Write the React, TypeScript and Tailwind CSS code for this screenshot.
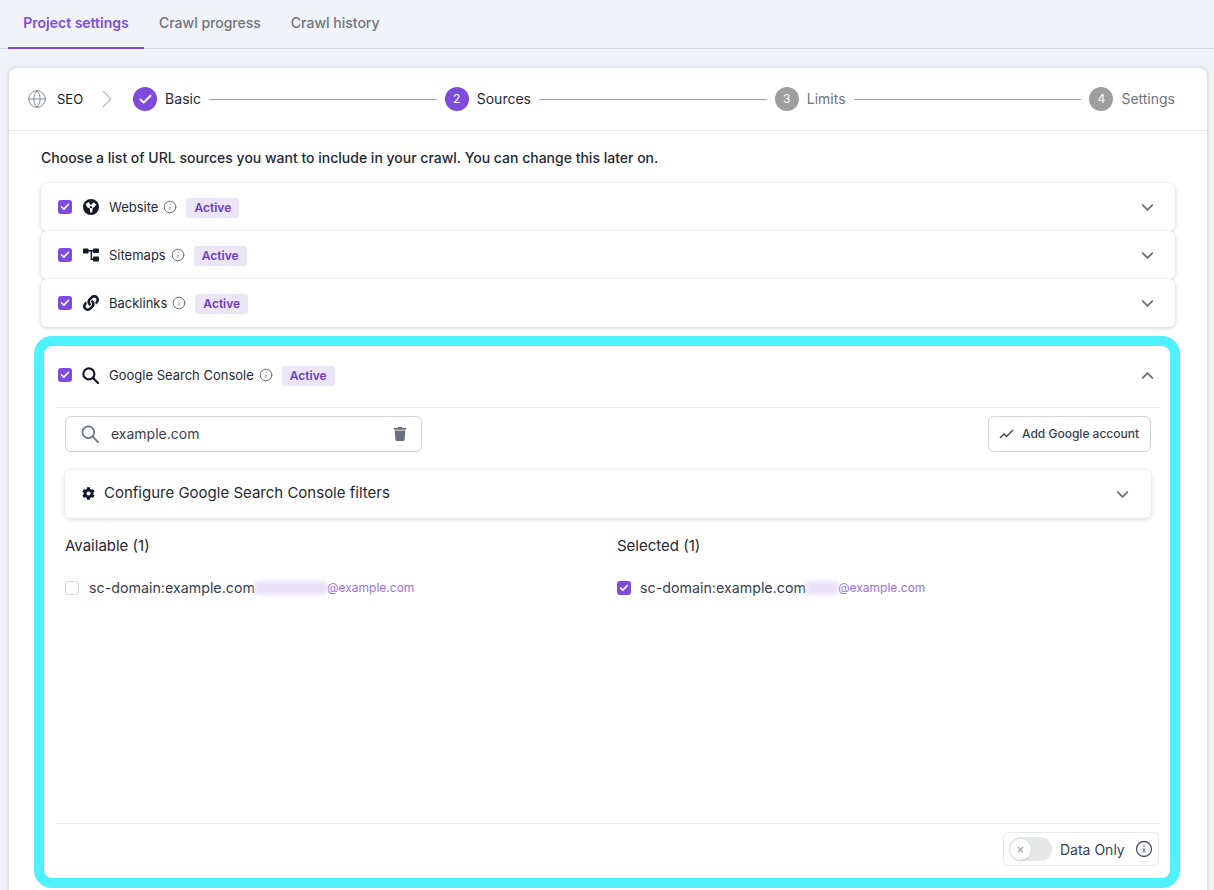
import { Check, ChevronDown, ChevronUp, Globe, Info, X } from "lucide-react";
import { FaCog, FaLink, FaTrash } from "react-icons/fa";
import { Fragment, ReactNode } from "react";

const steps = [
  { n: "2", label: "Sources" },
  { n: "3", label: "Limits" },
  { n: "4", label: "Settings" },
];

function Checkbox() {
  return (
    <span className="w-[14px] h-[14px] rounded-[3px] bg-[#7f4bdc] flex items-center justify-center shrink-0">
      <Check size={10} strokeWidth={4} className="text-white" />
    </span>
  );
}

function WebsiteIcon() {
  return (
    <svg width="16" height="16" viewBox="0 0 16 16" className="shrink-0">
      <circle cx="8" cy="8" r="8" fill="#111827" />
      <path
        fill="#fff"
        d="M2.6 5.2 5.4 2.9 8 6.2 10.4 3.2 13.2 5.4 11.4 8.2 9.6 8.8 9.4 13.2 7.2 13.4 6.8 9.4 4.2 8.2z"
      />
      <path fill="#111827" d="M6.8 7.4h2.2v1.6H6.8z" />
    </svg>
  );
}

function SitemapIcon() {
  return (
    <svg width="16" height="14" viewBox="0 0 16 14" fill="#111827" className="shrink-0">
      <rect x="0" y="0.5" width="5.5" height="5" rx="0.8" />
      <rect x="10" y="0.5" width="6" height="4.5" rx="0.8" />
      <rect x="10" y="8.5" width="6" height="5" rx="0.8" />
      <path d="M5 2h5.5v1.4H9v7.2h1.5V12H7.6V3.4H5z" />
    </svg>
  );
}

function SearchGlyph({ size, width, color }: { size: number; width: number; color: string }) {
  return (
    <svg width={size} height={size} viewBox="0 0 16 16" fill="none" stroke={color} strokeWidth={width} className="shrink-0">
      <circle cx="6.5" cy="6.5" r="5.2" />
      <path d="M10.4 10.4 15.4 15.4" strokeLinecap="round" />
    </svg>
  );
}

function Active() {
  return (
    <span className="h-5 px-2 rounded-[3px] bg-[#ebe5f6] text-[#6b3cc5] text-xs font-semibold flex items-center">
      Active
    </span>
  );
}

function SourceHead({ icon, label, open }: { icon: ReactNode; label: string; open?: boolean }) {
  return (
    <div className="h-12 flex items-center">
      <Checkbox />
      <span className="w-[19px] ml-[9px] flex justify-center text-[#111827]">{icon}</span>
      <span className="ml-[9px] pt-[1px] text-[13px] text-[#1f2937]">{label}</span>
      <Info size={14} strokeWidth={1.7} className="ml-[5px] text-[#6b7280]" />
      <span className="ml-[9px] pt-[2px]">
        <Active />
      </span>
      {open ? (
        <ChevronUp size={19} strokeWidth={2.4} className="ml-auto mr-[2px] text-[#6b7280]" />
      ) : (
        <ChevronDown size={19} strokeWidth={2.4} className="ml-auto mr-[2px] text-[#6b7280]" />
      )}
    </div>
  );
}

function Source({ icon, label }: { icon: ReactNode; label: string }) {
  return (
    <div className="bg-white rounded-md shadow-[0_1px_4px_rgba(0,0,0,0.2)] pl-[17px] pr-[16px]">
      <SourceHead icon={icon} label={label} />
    </div>
  );
}

function Account({ blur, checked }: { blur: string; checked?: boolean }) {
  return (
    <div className="h-5 flex items-center">
      {checked ? (
        <Checkbox />
      ) : (
        <span className="w-[14px] h-[14px] rounded-[3px] border border-[#d1d5db] bg-white shrink-0" />
      )}
      <span className={`${checked ? "ml-[9px]" : "ml-[10px]"} text-[14.25px] text-[#374151]`}>sc-domain:example.com</span>
      <span className={`${blur} h-[14px] bg-[#e9e1fa] blur-[2px]`} />
      <span className="text-xs text-[#9a6fe6]">@example.com</span>
    </div>
  );
}

export default function App() {
  return (
    <div
      className="w-[1214px] h-[890px] overflow-hidden bg-[#f0f3f7] text-[#111827]"
      style={{ fontFamily: "Inter, 'Noto Sans', sans-serif" }}
    >
      {/* Tabs */}
      <div className="h-[49px] border-b border-[#cfd2dc] pl-2 flex text-sm font-medium whitespace-nowrap">
        <div className="w-[136px] h-[49px] border-b-2 border-[#7f4bdc] text-[#7f4bdc] font-semibold flex items-center justify-center pb-[1px]">
          Project settings
        </div>
        <div className="px-[15px] flex items-center pb-[3px] text-[#71747f]">Crawl progress</div>
        <div className="px-[15px] flex items-center pb-[3px] text-[#71747f]">Crawl history</div>
      </div>

      <div className="mt-[19px] ml-[9px] w-[1198px] h-[900px] bg-white rounded-t-lg shadow-[0_0_4px_rgba(0,0,0,0.18)]">
        {/* Stepper */}
        <div className="h-[63px] border-b border-[#e5e7eb] flex items-center pl-[18px] pr-[32px] text-sm">
          <Globe size={20} strokeWidth={1.1} className="text-[#7d8593]" />
          <span className="ml-[10px] text-[13px]">SEO</span>
          <svg width="12" height="18" viewBox="0 0 12 18" fill="none" stroke="#b4b9c2" strokeWidth="1.1" className="ml-[18px]">
            <path d="M2 1l8 8-8 8" />
          </svg>
          <span className="ml-[20px] w-6 h-6 rounded-full bg-[#7f4bdc] flex items-center justify-center">
            <Check size={15} strokeWidth={3.2} className="text-white" />
          </span>
          <span className="ml-2 text-[#1f2937]">Basic</span>
          {steps.map((s, i) => (
            <Fragment key={s.n}>
              <span className="mx-2 flex-1 h-px bg-[#9ca3af]" />
              <span
                className={`w-6 h-6 rounded-full text-xs text-white flex items-center justify-center ${
                  i === 0 ? "bg-[#7f4bdc]" : "bg-[#9e9e9e]"
                }`}
              >
                {s.n}
              </span>
              <span className={`ml-2 ${i === 0 ? "text-[#1f2937]" : "text-[#71747f]"}`}>{s.label}</span>
            </Fragment>
          ))}
        </div>

        <div className="px-8">
          <p className="pt-[18px] h-[52px] text-sm font-medium leading-[18px] text-[#1f2937]">
            Choose a list of URL sources you want to include in your crawl. You can change this later on.
          </p>
          <Source icon={<WebsiteIcon />} label="Website" />
          <Source icon={<SitemapIcon />} label="Sitemaps" />
          <Source icon={<FaLink size={16} />} label="Backlinks" />
        </div>

        {/* Highlighted Google Search Console panel */}
        <div className="mt-[9px] ml-[25px] mr-[27px] h-[552px] border-[10px] border-[#4ff1ff] rounded-[18px] bg-white">
          <div className="h-full flex flex-col pl-[13px] pr-[11px]">
            <div className="h-[62px] border-b border-[#e5e7eb] pl-[1px] flex flex-col justify-center pb-[3px]">
              <SourceHead icon={<SearchGlyph size={17} width={2} color="#111827" />} label="Google Search Console" open />
            </div>

            <div className="mt-2 px-2 flex justify-between">
              <div className="w-[357px] h-9 rounded-md border border-[#d1d5db] shadow-[0_1px_1px_rgba(0,0,0,0.05)] flex items-center pl-[15px] pr-[14px]">
                <SearchGlyph size={18} width={1.5} color="#6b7280" />
                <span className="ml-3 text-sm text-[#374151]">example.com</span>
                <FaTrash size={14} className="ml-auto text-[#6b7280]" />
              </div>
              <div className="w-[163px] h-9 rounded-md border border-[#d1d5db] flex items-center pl-[10px] text-xs font-medium text-[#374151]">
                <svg width="15" height="10" viewBox="0 0 15 10" fill="none" stroke="#374151" strokeWidth="1.3" className="shrink-0">
                  <path d="M1 9l4-4 2.5 2.5L14 1" />
                </svg>
                <span className="ml-[8px]">Add Google account</span>
              </div>
            </div>

            <div className="mt-[18px] mx-2 h-12 rounded-md shadow-[0_1px_5px_rgba(0,0,0,0.18)] flex items-center pl-[17px] pr-[19px]">
              <FaCog size={13} className="mb-[1px] text-[#111827]" />
              <span className="ml-[9px] pb-[1px] text-[15px] text-[#1f2937]">Configure Google Search Console filters</span>
              <ChevronDown size={19} strokeWidth={2.4} className="ml-auto text-[#6b7280]" />
            </div>

            <div className="mt-[18px] px-2 flex-1 grid grid-cols-[552px_1fr]">
              <div>
                <div className="text-[15px] leading-5 text-[#1f2937]">Available (1)</div>
                <div className="mt-[22px]">
                  <Account blur="w-[72px]" />
                </div>
              </div>
              <div>
                <div className="text-[15px] leading-5 text-[#1f2937]">Selected (1)</div>
                <div className="mt-[22px]">
                  <Account blur="w-[32px]" checked />
                </div>
              </div>
            </div>

            <div className="h-[55px] border-t border-[#e5e7eb] flex items-start pt-[8px] justify-end">
              <div className="w-[156px] h-[34px] rounded-md border border-[#e5e7eb] flex items-center pl-[5px]">
                <span className="w-[43px] h-6 rounded-full bg-[#e5e7eb] flex items-center pl-[1px]">
                  <span className="w-[21px] h-[21px] rounded-full bg-white shadow flex items-center justify-center">
                    <X size={9} strokeWidth={3} className="text-[#9ca3af]" />
                  </span>
                </span>
                <span className="ml-2 pt-[2px] text-sm text-[#374151]">Data Only</span>
                <Info size={18} strokeWidth={1.7} className="ml-[10px] text-[#4b5563]" />
              </div>
            </div>
          </div>
        </div>
      </div>
    </div>
  );
}
